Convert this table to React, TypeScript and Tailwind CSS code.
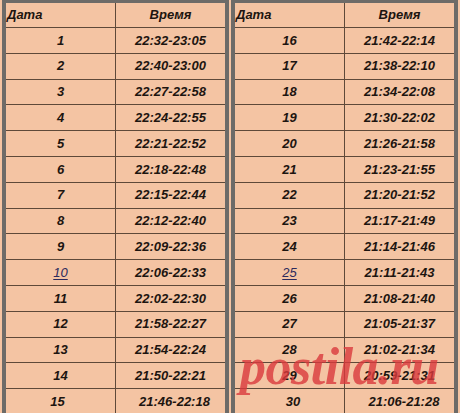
import React from "react"

type Row = { d: string; t: string; link?: boolean; dShift?: string; tShift?: string }

const left: Row[] = [
  { d: "1", t: "22:32-23:05" },
  { d: "2", t: "22:40-23:00" },
  { d: "3", t: "22:27-22:58" },
  { d: "4", t: "22:24-22:55" },
  { d: "5", t: "22:21-22:52" },
  { d: "6", t: "22:18-22:48" },
  { d: "7", t: "22:15-22:44" },
  { d: "8", t: "22:12-22:40" },
  { d: "9", t: "22:09-22:36" },
  { d: "10", t: "22:06-22:33", link: true },
  { d: "11", t: "22:02-22:30" },
  { d: "12", t: "21:58-22:27" },
  { d: "13", t: "21:54-22:24" },
  { d: "14", t: "21:50-22:21" },
  { d: "15", t: "21:46-22:18", dShift: "pr-[6px]", tShift: "pl-[8px]" },
]

const right: Row[] = [
  { d: "16", t: "21:42-22:14" },
  { d: "17", t: "21:38-22:10" },
  { d: "18", t: "21:34-22:08" },
  { d: "19", t: "21:30-22:02" },
  { d: "20", t: "21:26-21:58" },
  { d: "21", t: "21:23-21:55" },
  { d: "22", t: "21:20-21:52" },
  { d: "23", t: "21:17-21:49" },
  { d: "24", t: "21:14-21:46" },
  { d: "25", t: "21:11-21:43", link: true },
  { d: "26", t: "21:08-21:40" },
  { d: "27", t: "21:05-21:37" },
  { d: "28", t: "21:02-21:34" },
  { d: "29", t: "20:59-21:31" },
  { d: "30", t: "21:06-21:28", dShift: "pl-[7px]", tShift: "pl-[9px]" },
]

function Table({ rows }: { rows: Row[] }) {
  return (
    <div className="w-[227px] shrink-0 border-[4px] border-t-[3px] border-[#6d6b68]">
      <div className="flex h-[25px] items-center border-b border-[#5e4939]">
        <div className="flex h-full w-[110px] items-center border-r border-[#5e4939] pl-[1px]">Дата</div>
        <div className="flex-1 text-center">Время</div>
      </div>
      {rows.map((r) => (
        <div key={r.d} className="flex h-[25.8px] items-center border-b border-[#5e4939]">
          <div className={`flex h-full w-[110px] items-center justify-center border-r border-[#5e4939] ${r.dShift ?? ""}`}>
            {r.link ? (
              <span className="font-normal text-[#2c2a5c] underline underline-offset-2">{r.d}</span>
            ) : (
              r.d
            )}
          </div>
          <div className={`flex-1 text-center ${r.tShift ?? ""}`}>{r.t}</div>
        </div>
      ))}
    </div>
  )
}

export default function App() {
  return (
    <div className="relative h-[413px] w-[460px] overflow-hidden bg-[#f4c4a3] font-['Liberation_Sans',Arial,sans-serif] text-[13px] font-bold italic text-[#1d1510]">
      <div className="flex gap-[2px] pl-[2px]">
        <Table rows={left} />
        <Table rows={right} />
      </div>
      {/* watermark */}
      <div className="pointer-events-none absolute left-[240px] top-[341px] font-['Liberation_Serif',serif] text-[52px] font-bold italic leading-none tracking-[-0.5px] text-[#d9393c]/80">
        postila.ru
      </div>
    </div>
  )
}
